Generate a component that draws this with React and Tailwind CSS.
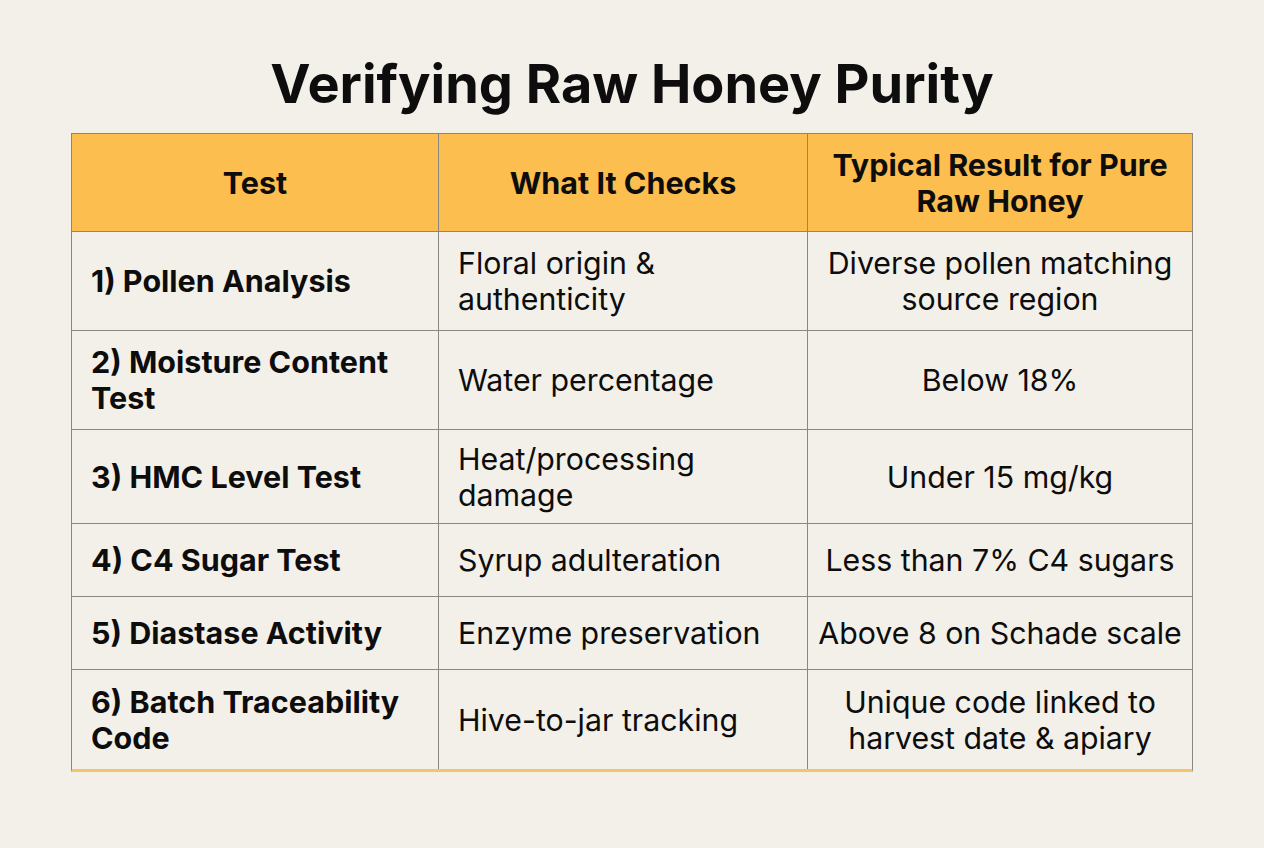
export default function App() {
  const rows = [
    { a: "1) Pollen Analysis", b: "Floral origin &\nauthenticity", c: "Diverse pollen matching\nsource region", h: "h-[99px]" },
    { a: "2) Moisture Content\nTest", b: "Water percentage", c: "Below 18%", h: "h-[99px]" },
    { a: "3) HMC Level Test", b: "Heat/processing\ndamage", c: "Under 15 mg/kg", h: "h-[94px]" },
    { a: "4) C4 Sugar Test", b: "Syrup adulteration", c: "Less than 7% C4 sugars", h: "h-[73px]" },
    { a: "5) Diastase Activity", b: "Enzyme preservation", c: "Above 8 on Schade scale", h: "h-[73px]" },
    { a: "6) Batch Traceability\nCode", b: "Hive-to-jar tracking", c: "Unique code linked to\nharvest date & apiary", h: "h-[99px]" },
  ];
  return (
    <div className="w-[1264px] h-[848px] bg-[#f3f0ea] text-[#0d0d0d] flex flex-col items-center" style={{ fontFamily: "Inter, 'Liberation Sans', sans-serif" }}>
      <h1 className="mt-[49px] h-[70px] text-[54px] leading-[70px] font-bold">Verifying Raw Honey Purity</h1>
      <div className="mt-[14px] w-[1122px] border-t border-l border-r border-[#8a8680] border-b-[3px] border-b-[#f6c46a]">
        <div className="grid grid-cols-[367px_369px_384px] h-[98px] bg-[#fcbe4f] border-b border-[#8a8680]">
          <div className="flex items-center justify-center text-[30.5px] font-bold leading-[36px] border-r border-[#8a8680]">Test</div>
          <div className="flex items-center justify-center text-[30.5px] font-bold leading-[36px] border-r border-[#8a8680]">What It Checks</div>
          <div className="flex items-center justify-center text-center text-[30.5px] font-bold leading-[36px]">Typical Result for Pure<br />Raw Honey</div>
        </div>
        {rows.map((r, i) => (
          <div key={i} className={`grid grid-cols-[367px_369px_384px] ${r.h} ${i < rows.length - 1 ? "border-b border-[#8a8680]" : ""}`}>
            <div className="flex items-center pl-[19px] text-[30.5px] font-bold leading-[36px] whitespace-pre-line border-r border-[#8a8680]">{r.a}</div>
            <div className="flex items-center pl-[19px] text-[30.3px] leading-[36px] whitespace-pre-line border-r border-[#8a8680]">{r.b}</div>
            <div className="flex items-center justify-center text-center text-[30.3px] leading-[36px] whitespace-pre-line">{r.c}</div>
          </div>
        ))}
      </div>
    </div>
  );
}
